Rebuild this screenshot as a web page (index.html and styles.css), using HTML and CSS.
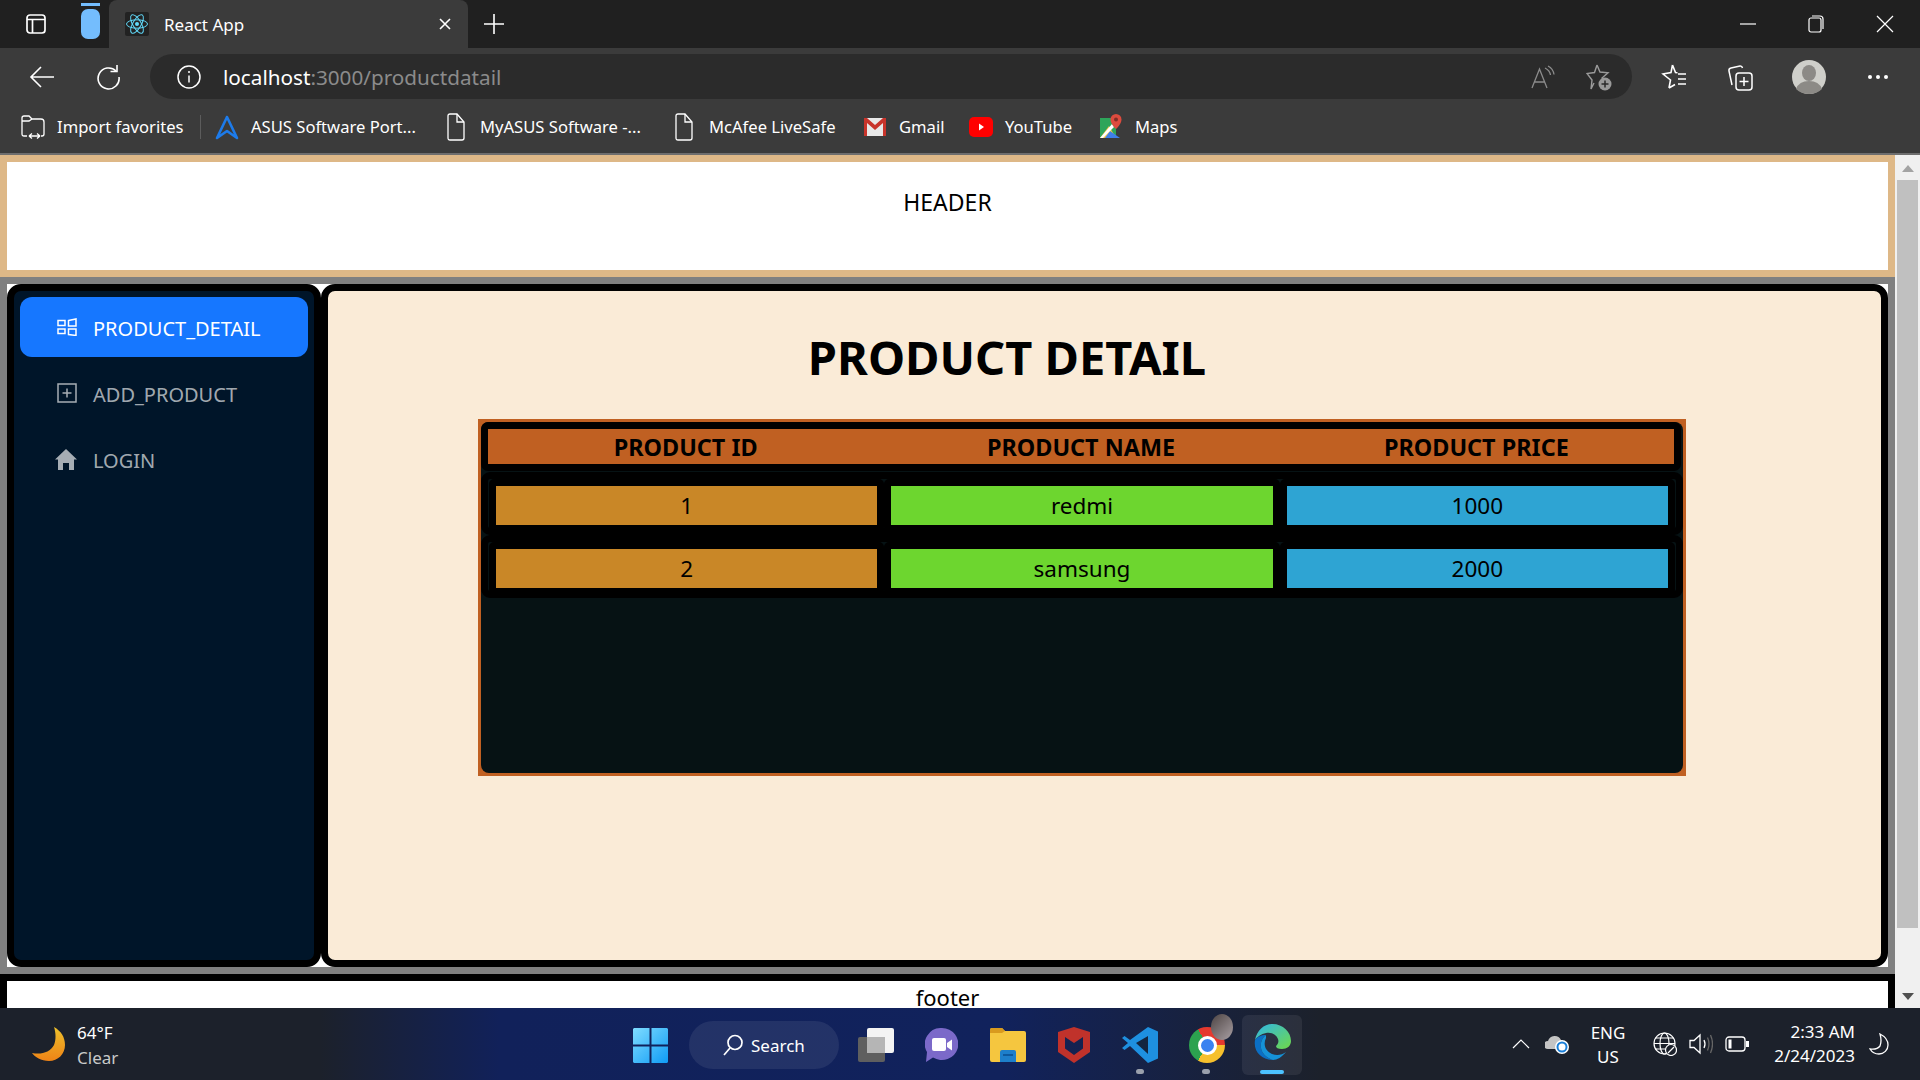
FILE: index.html
```html
<!DOCTYPE html>
<html lang="en">

<head>
    <meta charset="UTF-8">
    <title>React App</title>
    <link rel="stylesheet" href="styles.css">
</head>

<body>
    <div class="tabstrip">
        <svg class="tabActions" width="22" height="22" viewBox="0 0 22 22" fill="none" stroke="#fff" stroke-width="1.7"><rect x="2" y="2" width="18" height="18" rx="3"/><path d="M2 6.5h18M7.5 6.5V20"/></svg>
        <div class="verticalPill"></div>
        <div class="tab">
            <span class="favicon">
                <svg width="24" height="24" viewBox="0 0 24 24" fill="none" stroke="#61dafb" stroke-width="1"><circle cx="12" cy="12" r="2" fill="#61dafb" stroke="none"/><ellipse cx="12" cy="12" rx="10.5" ry="4.2"/><ellipse cx="12" cy="12" rx="10.5" ry="4.2" transform="rotate(60 12 12)"/><ellipse cx="12" cy="12" rx="10.5" ry="4.2" transform="rotate(120 12 12)"/></svg>
            </span>
            <span class="tabTitle">React App</span>
            <svg class="tabClose" width="14" height="14" viewBox="0 0 14 14" stroke="#fff" stroke-width="1.6"><path d="M2 2l10 10M12 2L2 12"/></svg>
        </div>
        <svg class="newTab" width="22" height="22" viewBox="0 0 22 22" stroke="#fff" stroke-width="1.6"><path d="M11 1v20M1 11h20"/></svg>
        <div class="winControls">
            <svg width="16" height="16" viewBox="0 0 16 16" stroke="#fff" stroke-width="1.2"><path d="M0 8h16"/></svg>
            <svg width="16" height="20" viewBox="0 0 16 20" fill="none" stroke="#fff" stroke-width="1.2"><rect x="1" y="4" width="12" height="14" rx="2"/><path d="M4 2h8a3 3 0 0 1 3 3v10"/></svg>
            <svg width="18" height="18" viewBox="0 0 18 18" stroke="#fff" stroke-width="1.2"><path d="M1 1l16 16M17 1L1 17"/></svg>
        </div>
    </div>

    <div class="toolbar">
        <svg class="backBtn" width="26" height="24" viewBox="0 0 26 24" fill="none" stroke="#fff" stroke-width="1.6"><path d="M25 12H2M12 2L2 12l10 10"/></svg>
        <svg class="reloadBtn" width="26" height="26" viewBox="0 0 26 26" fill="none" stroke="#fff" stroke-width="1.6"><path d="M21 7a10.5 10.5 0 1 0 3 6"/><path d="M22 1v6.500h-6.500"/></svg>
        <div class="addressBar">
            <svg width="24" height="24" viewBox="0 0 24 24" fill="none" stroke="#fff" stroke-width="1.5"><circle cx="12" cy="12" r="11"/><path d="M12 10.500v7"/><circle cx="12" cy="7" r="1" fill="#fff" stroke="none"/></svg>
            <span class="url"><b>localhost</b>:3000/productdatail</span>
            <svg class="readAloud" width="24" height="24" viewBox="0 0 24 24" fill="none" stroke="#8c8c8c" stroke-width="1.3"><path d="M1 23L8.500 4 16 23M3.500 17h10"/><path d="M14 3c3 1.500 5 4 5.500 7M17 1c3 1.500 5.500 5 6 8.500"/></svg>
            <svg class="favAdd" width="26" height="28" viewBox="0 0 26 28" fill="none" stroke="#9a9a9a" stroke-width="1.4"><path d="M11 2l3 7 8 .8-6 5.200 1.500 2M8 20l-3 6 1-9-5-6.500 7.500-1L11 2"/><circle cx="19" cy="21" r="6.500" fill="#9a9a9a" stroke="none"/><path d="M19 17.500v7M15.500 21h7" stroke="#2b2b2b" stroke-width="1.500"/></svg>
        </div>
        <svg class="favList" width="26" height="28" viewBox="0 0 26 28" fill="none" stroke="#fff" stroke-width="1.600"><path d="M11.500 2l3 7.500 2 .2M8 25l1.500-8L2 11l8-1.500L11.500 2M8 25l6-3.500"/><path d="M17 11h8M17 16h8M17 21h8"/></svg>
        <svg class="collections" width="26" height="28" viewBox="0 0 26 28" fill="none" stroke="#fff" stroke-width="1.500"><path d="M5 22L2 8q-.5-2.500 2-3l9-2q2-.2 2.500 2"/><rect x="9" y="10" width="16" height="17" rx="3"/><path d="M17 14v9M12.500 18.500h9"/></svg>
        <div class="profile">
            <svg width="34" height="34" viewBox="0 0 34 34"><circle cx="17" cy="17" r="17" fill="#cfcfca"/><ellipse cx="17" cy="13" rx="7" ry="8" fill="#8c8a86"/><path d="M4 29q3-8 13-8t13 8q-5 5-13 5T4 29z" fill="#8c8a86"/></svg>
        </div>
        <div class="moreBtn"><i></i><i></i><i></i></div>
    </div>

    <div class="favbar">
        <div class="fav favImport">
            <svg width="24" height="26" viewBox="0 0 24 26" fill="none" stroke="#fff" stroke-width="1.300"><path d="M6 22H3q-2 0-2-2V4q0-2 2-2h5l3 3h9q3 0 3 3v12q0 2-2 2h-1"/><path d="M1 7h7l3-2M8 22h11M8 22l3-2.500M8 22l3 2.500M19 22l-3-2.500M19 22l-3 2.500"/></svg>
            <span>Import favorites</span>
        </div>
        <div class="favDivider"></div>
        <div class="fav favAsus">
            <svg width="24" height="26" viewBox="0 0 24 26" fill="none" stroke="#1d7bea" stroke-width="2.600" stroke-linejoin="round"><path d="M12 3L2 24l10-7 10 7z"/></svg>
            <span>ASUS Software Port...</span>
        </div>
        <div class="fav favMyasus">
            <svg width="18" height="28" viewBox="0 0 18 28" fill="none" stroke="#fff" stroke-width="1.300"><path d="M1 3q0-2 2-2h7l7 8v16q0 2-2 2H3q-2 0-2-2z"/><path d="M10 1v8h7"/></svg>
            <span>MyASUS Software -...</span>
        </div>
        <div class="fav favMcafee">
            <svg width="18" height="28" viewBox="0 0 18 28" fill="none" stroke="#fff" stroke-width="1.300"><path d="M1 3q0-2 2-2h7l7 8v16q0 2-2 2H3q-2 0-2-2z"/><path d="M10 1v8h7"/></svg>
            <span>McAfee LiveSafe</span>
        </div>
        <div class="fav favGmail">
            <svg width="22" height="18" viewBox="0 0 22 18"><rect width="22" height="18" fill="#e8e8e8"/><path d="M0 0h3l8 7 8-7h3v18h-3V5l-8 7-8-7v13H0z" fill="#c8342b"/></svg>
            <span>Gmail</span>
        </div>
        <div class="fav favYoutube">
            <svg width="24" height="20" viewBox="0 0 24 20"><rect width="24" height="20" rx="5" fill="#f00"/><path d="M10 6.500l5 3.500-5 3.500z" fill="#fff"/></svg>
            <span>YouTube</span>
        </div>
        <div class="fav favMaps">
            <svg width="22" height="26" viewBox="0 0 22 26"><path d="M0 4h16v20H0z" fill="#2ea55a"/><path d="M0 24l9-12 7 12z" fill="#f6c544"/><path d="M5 24l5-7 10 7z" fill="#3f7fe8"/><path d="M0 24L12 10l2 3L3 24z" fill="#fff"/><path d="M16 0a5.500 5.500 0 0 1 5.500 5.500C21.500 10 16 15 16 15s-5.500-5-5.500-9.500A5.500 5.500 0 0 1 16 0z" fill="#dd4b3e"/><circle cx="16" cy="5.500" r="2" fill="#802d27"/></svg>
            <span>Maps</span>
        </div>
    </div>

    <div class="viewport">
        <div class="page">
            <header class="siteHeader">HEADER</header>
            <div class="siteBody">
                <aside class="sider">
                    <ul class="menu">
                        <li class="menuItem active">
                            <svg width="20" height="18" viewBox="0 0 20 18" fill="none" stroke="currentColor" stroke-width="1.500"><path d="M1 2.500h7v5H1zM1 11h7v4.500H1zM11.500 2.500L19 1v7h-7.500zM11.500 11H19v6.500l-7.500-1z"/></svg>
                            <span>PRODUCT_DETAIL</span>
                        </li>
                        <li class="menuItem">
                            <svg width="20" height="20" viewBox="0 0 20 20" fill="none" stroke="currentColor" stroke-width="1.500"><path d="M1 1h18v18H1zM10 5.500v9M5.500 10h9"/></svg>
                            <span>ADD_PRODUCT</span>
                        </li>
                        <li class="menuItem">
                            <svg class="homeIcon" width="22" height="21" viewBox="0 0 22 21" fill="currentColor"><path d="M11 0l11 10.500h-3V21h-5v-7H8v7H3V10.500H0z"/></svg>
                            <span>LOGIN</span>
                        </li>
                    </ul>
                </aside>
                <main class="content">
                    <h1 class="pageTitle">PRODUCT DETAIL</h1>
                    <div class="tableWrap">
                        <div class="tableInner">
                            <div class="tableHead">
                                <div>PRODUCT ID</div>
                                <div>PRODUCT NAME</div>
                                <div>PRODUCT PRICE</div>
                            </div>
                            <div class="tableRow">
                                <div class="cell cellId">1</div>
                                <div class="cell cellName">redmi</div>
                                <div class="cell cellPrice">1000</div>
                            </div>
                            <div class="tableRow">
                                <div class="cell cellId">2</div>
                                <div class="cell cellName">samsung</div>
                                <div class="cell cellPrice">2000</div>
                            </div>
                        </div>
                    </div>
                </main>
            </div>
            <footer class="siteFooter">footer</footer>
        </div>
        <div class="scrollbar">
            <div class="arrowUp"></div>
            <div class="thumb"></div>
            <div class="arrowDown"></div>
        </div>
    </div>

    <div class="taskbar">
        <div class="weather">
            <svg width="34" height="34" viewBox="0 0 34 34"><defs><linearGradient id="moonGrad" x1="0" y1="0" x2="0" y2="1"><stop offset="0" stop-color="#ecc02c"/><stop offset="1" stop-color="#ef8316"/></linearGradient></defs><path d="M22 0c7 4 11 10 11 18 0 9-7 16-16 16C9 34 3 30 0 26c10 2 18-1 22-8 2-5 2-12 0-18z" fill="url(#moonGrad)"/></svg>
            <div class="weatherText"><div>64°F</div><div class="dim">Clear</div></div>
        </div>
        <div class="taskCenter">
            <svg class="winLogo" width="35" height="35" viewBox="0 0 35 35"><defs><linearGradient id="winGrad" x1="0" y1="0" x2="1" y2="1"><stop offset="0" stop-color="#7fdcff"/><stop offset="1" stop-color="#0f9bf5"/></linearGradient></defs><path d="M1 0h15.500v16.500H0V1zM18.500 0H34l1 1v15.500H18.500zM0 18.500h16.500V35H1l-1-1zM18.500 18.500H35V34l-1 1H18.500z" fill="url(#winGrad)"/></svg>
            <div class="searchPill">
                <svg width="20" height="22" viewBox="0 0 20 22" fill="none" stroke="#fff" stroke-width="1.700"><circle cx="12" cy="8.500" r="7"/><path d="M7 14l-6 7"/></svg>
                <span>Search</span>
            </div>
            <svg class="taskView" width="36" height="34" viewBox="0 0 36 34"><rect x="0" y="9" width="27" height="25" rx="2" fill="#5f5f5f"/><rect x="9" y="0" width="27" height="25" rx="2" fill="#f3f3f3"/><rect x="9" y="9" width="18" height="16" fill="#b5b5b5"/></svg>
            <svg class="teams" width="33" height="34" viewBox="0 0 33 34"><path d="M17 0a16.500 16 0 1 1-9 29.500L1 34l1-10A16.500 16 0 0 1 17 0z" fill="#7b69c9"/><rect x="7" y="10" width="14" height="13" rx="2" fill="#fff"/><path d="M22 15l5-3.500v11L22 19z" fill="#fff"/></svg>
            <svg class="folder" width="36" height="34" viewBox="0 0 36 34"><path d="M0 2q0-2 2-2h10l3 3h19q2 0 2 2v27q0 2-2 2H2q-2 0-2-2z" fill="#f5c63f"/><path d="M0 2q0-2 2-2h10l3 3-3 2H0z" fill="#d99a1e"/><path d="M10 34V24q0-2 2-2h12q2 0 2 2v10z" fill="#1d7fcb"/><rect x="13" y="26" width="10" height="2" fill="#0e5a9e"/></svg>
            <svg class="mcafee" width="32" height="36" viewBox="0 0 32 36"><path d="M0 5l16-5 16 5v20L16 36 0 25zM7 10v11.500l9 6.500 9-6.500V10l-9 6z" fill="#c0322b" fill-rule="evenodd"/></svg>
            <svg class="vscode" width="36" height="36" viewBox="0 0 36 36"><path d="M26 0l10 4.500v27L26 36 8 19l-5.500 4L0 21l6-5-6-5 2.500-2L8 13z" fill="#1e90e0"/><path d="M26 9L14 16l12 11z" fill="#13253f"/></svg>
            <div class="chrome"><i></i><span class="chromeBadge"></span></div>
            <div class="edgeBox">
                <svg width="38" height="36" viewBox="0 0 38 36"><defs><linearGradient id="edgeGrad" x1="0" y1="0" x2="1" y2="1"><stop offset="0" stop-color="#2fb6e8"/><stop offset="1" stop-color="#6fd948"/></linearGradient></defs><path d="M2 16C4 6 11 0 19.500 0 30 0 38 8 38 17c0 5-4 8-9 8-4 0-6-1-6-3 2-2 3-4 2-7-2-5-7-7-12-6-5 1-9 4-11 7z" fill="url(#edgeGrad)"/><path d="M2 16c2-3 6-5 11-5-4 3-6 8-5 13 1 6 6 10 12 12C9 36 0 28 2 16z" fill="#0b6fc4"/><path d="M13 14c-3 6-1 13 6 16 5 2 10 1 14-2-4 5-9 8-13 8-6-2-11-6-12-12-1-5 1-10 5-13z" fill="#1592d8"/></svg>
            </div>
            <i class="runDot dotVscode"></i>
            <i class="runDot dotChrome"></i>
            <i class="runLine"></i>
        </div>
        <div class="tray">
            <svg class="trayCaret" width="18" height="10" viewBox="0 0 18 10" fill="none" stroke="#fff" stroke-width="1.200"><path d="M1 9l8-8 8 8"/></svg>
            <svg class="trayCloud" width="24" height="20" viewBox="0 0 24 20"><path d="M3 15a4 4 0 0 1 0-8 7 7 0 0 1 13-1 5 5 0 0 1 3 6l-4 3z" fill="#c4c4c4"/><circle cx="17" cy="13" r="7" fill="#fff"/><circle cx="17" cy="13" r="4.500" fill="none" stroke="#1a7fd8" stroke-width="2"/></svg>
            <div class="trayLang"><div>ENG</div><div>US</div></div>
            <svg class="trayGlobe" width="24" height="24" viewBox="0 0 24 24" fill="none" stroke="#fff" stroke-width="1.200"><circle cx="11.500" cy="11.500" r="10.500"/><ellipse cx="11.500" cy="11.500" rx="4.500" ry="10.500"/><path d="M1 11.500h21M2.500 6h18M2.500 17h18"/><circle cx="18" cy="18" r="5.500" fill="#1c212b"/><path d="M15 21l6-6"/></svg>
            <svg class="traySound" width="24" height="22" viewBox="0 0 24 22" fill="none" stroke="#fff" stroke-width="1.300"><path d="M1 7.500h4L11 2v18l-6-5.500H1z"/><path d="M15 7q2 4 0 8"/><path d="M18.500 4.500q3 6.500 0 13M21.500 2q4 9 0 18" stroke="#666"/></svg>
            <svg class="trayBattery" width="24" height="16" viewBox="0 0 24 16" fill="none" stroke="#fff" stroke-width="1.300"><rect x="1" y="1" width="19" height="14" rx="3"/><rect x="3.500" y="3.500" width="3" height="9" fill="#fff" stroke="none"/><rect x="21" y="5" width="3" height="6" fill="#fff" stroke="none"/></svg>
            <div class="trayClock"><div>2:33 AM</div><div>2/24/2023</div></div>
            <svg class="trayMoon" width="20" height="22" viewBox="0 0 20 22" fill="none" stroke="#fff" stroke-width="1.300"><path d="M11 1q8 4 8 11a9 9 0 0 1-9 9q-6 0-9-5 7 1 10-3 2-5 0-12z"/></svg>
        </div>
    </div>
</body>

</html>
```

FILE: styles.css
```css
* {
    margin: 0;
    padding: 0;
    box-sizing: border-box;
}

body {
    width: 1920px;
    height: 1080px;
    overflow: hidden;
    display: flex;
    flex-direction: column;
    font-family: "Noto Sans", "Open Sans", sans-serif;
}

svg {
    flex-shrink: 0;
    display: block;
}

/* browser chrome */
.tabstrip {
    height: 48px;
    display: flex;
    align-items: center;
    background-color: #202020;
}

.tabActions {
    margin-left: 25px;
}

.verticalPill {
    position: relative;
    width: 19px;
    height: 30px;
    margin: 0 9px 0 34px;
    border-radius: 7px;
    background-color: #74bdfd;
}

.verticalPill::before {
    content: "";
    position: absolute;
    left: 0;
    top: -6px;
    width: 19px;
    height: 3px;
    background-color: #74bdfd;
}

.tab {
    width: 359px;
    height: 48px;
    display: flex;
    align-items: center;
    padding-left: 16px;
    border-radius: 8px 8px 0 0;
    background-color: #3b3b3b;
    color: #fff;
}

.favicon {
    width: 24px;
    height: 24px;
    background-color: #222;
    border-radius: 2px;
}

.tabTitle {
    flex: 1;
    margin-left: 15px;
    font-size: 17px;
}

.tabClose {
    margin-right: 16px;
}

.newTab {
    margin-left: 15px;
}

.winControls {
    margin-left: auto;
    display: flex;
    align-items: center;
    gap: 52px;
    padding-right: 26px;
}

.toolbar {
    height: 57px;
    display: flex;
    align-items: center;
    padding: 0 0 0 29px;
    background-color: #3b3b3b;
}

.reloadBtn {
    margin-left: 40px;
}

.addressBar {
    width: 1482px;
    height: 45px;
    margin-left: 29px;
    display: flex;
    align-items: center;
    padding-left: 27px;
    border-radius: 23px;
    background-color: #2b2b2b;
}

.url {
    flex: 1;
    margin-left: 22px;
    font-size: 20.7px;
    color: #8b8b8b;
}

.url b {
    font-weight: 400;
    color: #fff;
}

.readAloud {
    margin-right: 31px;
}

.favAdd {
    margin-right: 20px;
}

.favList {
    margin-left: 29px;
}

.collections {
    margin-left: 40px;
}

.profile {
    margin-left: 39px;
}

.moreBtn {
    display: flex;
    gap: 4px;
    margin-left: 42px;
}

.moreBtn i {
    width: 4px;
    height: 4px;
    border-radius: 50%;
    background-color: #fff;
}

.favbar {
    height: 50px;
    display: flex;
    align-items: center;
    padding: 0 0 5px 21px;
    border-bottom: 2px solid #6e6e6e;
    background-color: #3b3b3b;
    color: #fff;
    font-size: 16.6px;
}

.fav {
    display: flex;
    align-items: center;
    flex-shrink: 0;
}

.favImport { width: 179px; gap: 12px; }
.favDivider {
    width: 1px;
    height: 24px;
    margin-right: 14px;
    background-color: #5c5c5c;
}
.favAsus { width: 232px; gap: 12px; }
.favMyasus { width: 228px; gap: 15px; }
.favMcafee { width: 189px; gap: 16px; }
.favGmail { width: 105px; gap: 13px; }
.favYoutube { width: 131px; gap: 12px; }
.favMaps { gap: 13px; }

/* page */
.viewport {
    flex: 1;
    min-height: 0;
    display: flex;
    overflow: hidden;
}

.page {
    width: 1895px;
    height: 900px;
    background-color: #808080;
}

.siteHeader {
    height: 122px;
    padding-top: 25px;
    text-align: center;
    border: 7px solid #deb887;
    background-color: #fff;
    font-size: 23px;
    line-height: 30px;
}

.siteBody {
    height: 683px;
    margin: 7px 7px;
    display: flex;
    background-color: #fff;
}

.sider {
    width: 314px;
    border: 7px solid #000;
    border-radius: 14px;
    background-color: #001529;
    padding: 6px;
}

.menu {
    list-style: none;
}

.menuItem {
    height: 60px;
    margin-bottom: 6px;
    padding: 2px 0 0 37px;
    display: flex;
    align-items: center;
    gap: 16px;
    border-radius: 12px;
    font-size: 20px;
    color: rgba(255, 255, 255, 0.65);
}

.menuItem svg {
    margin-top: -2px;
}

.menuItem .homeIcon {
    margin-left: -2px;
}

.menuItem.active {
    background-color: #1677ff;
    color: #fff;
}

.content {
    flex: 1;
    border: 7px solid #000;
    border-radius: 14px;
    background-color: #faebd7;
}

.pageTitle {
    width: 1358px;
    margin-top: 33px;
    text-align: center;
    font-size: 47px;
    line-height: 66px;
    color: #000;
}

.tableWrap {
    width: 1208px;
    height: 357px;
    margin: 29px 0 0 150px;
    padding: 3px;
    background-color: #c06022;
}

.tableInner {
    height: 100%;
    border-radius: 8px;
    background-color: #061214;
}

.tableHead {
    width: 1200px;
    height: 49px;
    display: grid;
    grid-template-columns: repeat(3, 1fr);
    border: 7px solid #000;
    border-radius: 7px;
    background-color: #c06022;
    text-align: center;
    font-size: 23.4px;
    font-weight: 700;
    line-height: 37px;
}

.tableRow {
    height: 63px;
    display: grid;
    grid-template-columns: repeat(3, 1fr);
    border: 7px solid #000;
    border-radius: 9px;
    padding: 0 1px;
}

.tableHead + .tableRow {
    margin-top: 1px;
}

.cell {
    border: 7px solid #000;
    border-radius: 5px;
    background-clip: padding-box;
    text-align: center;
    font-size: 22.5px;
    line-height: 39px;
}

.cellId { background-color: #c98727; }
.cellName { background-color: #6dd62f; }
.cellPrice { background-color: #2ea4d3; }

.siteFooter {
    height: 60px;
    border: 7px solid #000;
    background-color: #fff;
    text-align: center;
    font-size: 22px;
    line-height: 30px;
    padding-top: 1px;
}

.scrollbar {
    width: 25px;
    height: 853px;
    padding: 0 2px;
    display: flex;
    flex-direction: column;
    align-items: center;
    background-color: #f0f0f0;
}

.arrowUp {
    width: 0;
    height: 0;
    margin-top: 10px;
    border: 6px solid transparent;
    border-top: 0;
    border-bottom: 7px solid #a3a3a3;
}

.thumb {
    width: 21px;
    height: 748px;
    margin-top: 8px;
    background-color: #c0c0c0;
}

.arrowDown {
    width: 0;
    height: 0;
    margin-top: 65px;
    border: 6px solid transparent;
    border-bottom: 0;
    border-top: 7px solid #505050;
}

/* windows taskbar */
.taskbar {
    height: 72px;
    display: flex;
    align-items: center;
    background: linear-gradient(90deg, #1c212b 0, #1c212b 320px, #11215a 500px, #11225c 1000px, #1c212b 1320px, #1c212b 100%);
    color: #fff;
}

.weather {
    width: 633px;
    display: flex;
    align-items: center;
    gap: 11px;
    padding-left: 32px;
    font-size: 17px;
    line-height: 25px;
}

.weatherText {
    padding-top: 2px;
}

.dim {
    color: #c9c9c9;
}

.taskCenter {
    position: relative;
    display: flex;
    align-items: center;
    width: 670px;
    padding-top: 2px;
}

.searchPill {
    width: 150px;
    height: 48px;
    margin-left: 21px;
    display: flex;
    align-items: center;
    gap: 8px;
    padding-left: 34px;
    border-radius: 24px;
    background-color: rgba(255, 255, 255, 0.08);
    font-size: 17px;
}

.taskView { margin-left: 19px; }
.teams { margin-left: 31px; }
.folder { margin-left: 32px; }
.mcafee { margin-left: 32px; }
.vscode { margin-left: 32px; }

.chrome {
    position: relative;
    width: 36px;
    height: 36px;
    margin-left: 31px;
    border-radius: 50%;
    background: conic-gradient(from -30deg, #e5392e 0 120deg, #f6c02c 120deg 240deg, #2ca24f 240deg 360deg);
    display: flex;
    align-items: center;
    justify-content: center;
}

.chrome i {
    width: 19px;
    height: 19px;
    border: 3px solid #fff;
    border-radius: 50%;
    background-color: #3b82f0;
}

.chromeBadge {
    position: absolute;
    top: -13px;
    right: -8px;
    width: 22px;
    height: 26px;
    border-radius: 50%;
    background: linear-gradient(135deg, #4d4443, #a89fa3);
}

.edgeBox {
    width: 60px;
    height: 60px;
    margin-left: 17px;
    padding-top: 9px;
    display: flex;
    justify-content: center;
    border-radius: 6px;
    background-color: rgba(255, 255, 255, 0.07);
}

.runDot {
    position: absolute;
    top: 56px;
    width: 8px;
    height: 5px;
    border-radius: 3px;
    background-color: #9aa0ac;
}

.dotVscode { left: 503px; }
.dotChrome { left: 569px; }

.runLine {
    position: absolute;
    top: 57px;
    left: 627px;
    width: 24px;
    height: 4px;
    border-radius: 2px;
    background-color: #4cc2ff;
}

.tray {
    flex: 1;
    display: flex;
    align-items: center;
    font-size: 17px;
    line-height: 24px;
}

.trayCaret { margin-left: 209px; }
.trayCloud { margin-left: 15px; }
.trayLang { width: 50px; margin-left: 14px; padding-top: 1px; text-align: center; }
.trayGlobe { margin-left: 20px; }
.traySound { margin-left: 12px; }
.trayBattery { margin-left: 12px; }
.trayClock { width: 100px; margin-left: 6px; text-align: right; }
.trayMoon { margin-left: 14px; }
```
